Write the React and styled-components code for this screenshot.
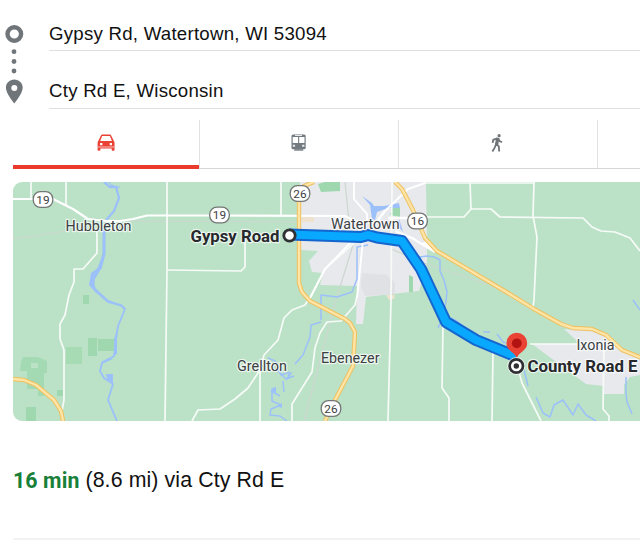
import React from 'react';
import styled, { createGlobalStyle } from 'styled-components';

const shields = [
  { x: 43, y: 199.5, label: '19' },
  { x: 219.5, y: 215, label: '19' },
  { x: 300, y: 193.5, label: '26' },
  { x: 417.5, y: 221, label: '16' },
  { x: 331, y: 408.5, label: '26' },
];

const towns = [
  { x: 65.5, y: 231, width: 66, label: 'Hubbleton' },
  { x: 331, y: 228.5, width: 68.5, label: 'Watertown' },
  { x: 237, y: 371, width: 50, label: 'Grellton' },
  { x: 321, y: 362.5, width: 58.5, label: 'Ebenezer' },
  { x: 576.5, y: 349.5, width: 38, label: 'Ixonia' },
];

const localRoads = [
  'M31 182V199',
  'M66 182V206',
  'M97 230V253L83 269H74V282L69 295L65 315L60 324V339L64 350V400L62 411',
  'M167 182V270L165 421',
  'M167 270L241 271L245 267V240',
  'M281 182V216',
  'M192 421L198 410L220 409L235 399L248 388L260 370L264 355L278 340L284 318L292 310L305 305L311 296L325 269L354 243',
  'M260 370V421',
  'M357 296L355 305L341 321L327 322L320 333L315 348L312 372L292 404V421',
  'M392 182L391 300L388 421',
  'M425 183H535',
  'M470 182L471 209L464 217H413',
  'M471 209L491 209L500 217L583 218L592 227L601 231L615 232L630 238L640 251',
  'M534 182L533 216L537 237L534 300L533 307',
  'M443 325L442 388L449 398V421',
  'M493 353L492 421',
  'M519 372L522 383L541 421',
  'M530 344H604L603 409L609 416V421',
];

const cityStreets = [
  'M355 238L325 269L309 300',
  'M354 182V199L367 214V222',
  'M363 240L357 298',
  'M385 211L408 189L425 183',
];

const streams = [
  'M321 320V295L337 297L352 292L357 279V247L368 245',
  'M321 322L311 325L310 337L303 355L295 364',
  'M268 358L275 361L281 375L290 372',
  'M294 376L286 379L275 368',
  'M283 381L284 392M280 396L271 391M276 388L272 389V401L281 405L271 409L270 415L280 416L287 421',
  'M408 255L420 257L427 256L434 257L440 260V271L444 280L447 292L446 301L443 317L438 328',
  'M451 318L458 322L462 325',
  'M483 332H490M497 334L503 342L506 343',
  'M524 370L528 386M536 397L543 413L550 417L554 405L563 400L573 415L578 404L586 415L596 421',
  'M626 377L626 394L627 402L632 414',
  'M633 300L640 310',
];

const App = () => {
  return (
    <>
      <GlobalStyle />
      <Page>
        <Waypoints>
          <WaypointRail />
          <Fields>
            <Field $height={43} $gap={5}>Gypsy Rd, Watertown, WI 53094</Field>
            <Field $height={58} $gap={6}>Cty Rd E, Wisconsin</Field>
          </Fields>
        </Waypoints>
        <Modes>
          <Mode $active><CarIcon /></Mode>
          <Mode><TrainIcon /></Mode>
          <Mode><WalkIcon /></Mode>
          <Mode />
        </Modes>
        <MapCard>
          <RouteMap />
        </MapCard>
        <Summary>
          <Duration>16 min</Duration>
          <Details>(8.6 mi) via Cty Rd E</Details>
        </Summary>
      </Page>
    </>
  );
};

const WaypointRail = () => (
  <Rail viewBox="0 0 26 84">
    <circle cx="14.3" cy="12" r="6.8" fill="none" stroke="#70757a" strokeWidth="4.4" />
    <g fill="#70757a">
      <circle cx="14" cy="29.7" r="2.4" />
      <circle cx="14" cy="39.5" r="2.4" />
      <circle cx="14" cy="49" r="2.4" />
      <path
        fillRule="evenodd"
        d="M14.3 57.5c-4.8 0-8.4 3.6-8.4 8.3 0 5.8 8.4 15.7 8.4 15.7s8.4-9.9 8.4-15.7c0-4.7-3.6-8.3-8.4-8.3zm0 5.4a3 3 0 1 1 0 6 3 3 0 0 1 0-6z"
      />
    </g>
  </Rail>
);

const CarIcon = () => (
  <Icon viewBox="0 0 18 18">
    <path
      fillRule="evenodd"
      fill="#ea4335"
      d="M4.1 1.2Q4.3.6 5.1.6H13q.8 0 1 .6L17.5 8.2V16q0 .8-.8.8h-1.2q-.8 0-.8-.8v-1.4H3.4V16q0 .8-.8.8H1.4q-.8 0-.8-.8V8.2zM5.2 2L3.2 7.1h11.7L12.9 2z"
    />
    <path fill="#f4938b" d="M1 12.2h16v1.6H1z" />
    <path fill="#fff" d="M3.1 8.9h2.3v2.3H3.1zM12.7 8.9H15v2.3h-2.3z" />
  </Icon>
);

const TrainIcon = () => (
  <Icon viewBox="0 0 18 18">
    <rect x="1.5" y="0.5" width="14.2" height="14.8" rx="1.5" fill="#747b80" />
    <path d="M2.7 3.1h5.4v5.8H2.7zM9.2 3.1h5.3v5.8H9.2z" fill="#fff" />
    <path d="M5 .9h7v1H5zM2.8 10.7h2.3v2.1H2.8zM12.1 10.7h2.3v2.1h-2.3z" fill="#e7e8e9" />
    <path d="M4.2 15.2h9v1.5h-9z" fill="#747b80" />
  </Icon>
);

const WalkIcon = () => (
  <Icon viewBox="0 0 18 18">
    <circle cx="10.1" cy="1.7" r="1.6" fill="#70757a" />
    <path
      d="M8.8 4.1L7.1 10.3M7.8 4.6L4.3 5.8L3.6 8.9M9.1 4.5L10.5 7L13 8.2M7.1 10L5.7 13.6L3.4 17.5M7.4 9.9L9.8 12.4L10.2 17.5"
      fill="none"
      stroke="#70757a"
      strokeWidth="1.8"
    />
    <path d="M7.2 3.5L10.4 4L9.3 10.5H6.1z" fill="#70757a" />
  </Icon>
);

const RouteMap = () => (
  <MapSvg viewBox="13 182 627 239" preserveAspectRatio="xMinYMin slice">
    <rect x="13" y="182" width="640" height="239" fill="#bbe2c6" />

    {/* woodland */}
    <g fill="#9fd8ae">
      <path d="M83 295h6v9h-6zM88 338h9v18h-9zM98 339h16v12H98z" />
      <path d="M66 347h16v17H66z" opacity="0.75" />
      <path d="M23 357h15l9 4v12h-3v23h-6v-7H27v-18h-7l1-9zM31 363v5h7v-5z" fillRule="evenodd" opacity="0.8" />
      <path d="M57 390h6v6h-6zM26 407h10v14H26z" />
    </g>

    {/* built-up areas */}
    <path
      fill="#e7e9ed"
      d="M300 182H426L427 240V263L419 291L366 297L363 324H356L357 286L320 285L323 273L312 272L309 261L318 251L301 250z"
    />
    <path fill="#e7e9ed" d="M532 344H580L564 329L592 331L606 337L622 350L640 360V375L630 377L624 385L624 394H604V386L586 384z" />
    <path fill="#dfe1e5" d="M362 273l25 2 8 8v11l-30 2-4-10z" />
    <path fill="#eee2cf" d="M302 217h12v5h-12zM386 295h9l-1 4-5 1z" />
    <g fill="#9fd8ae">
      <path d="M318 184l7-2h15v9l-19 1zM392 208h8v9l-10-2zM409 275l4 2v15h-4z" />
    </g>

    {/* rail lines */}
    <path d="M13 239L66 231M120 221L300 222M429 265L487 284M345 182L349 222M391 249L429 265M353 245L336 300L304 421" fill="none" stroke="#ccd7d0" strokeWidth="1.2" />

    {/* rivers */}
    <g fill="none" stroke="#9cc0f9" strokeLinejoin="round">
      <path d="M104 182L110 187L116 187L119 198L114 211L107 219L104 228V254L98 270" strokeWidth="2.3" />
      <path d="M104 182L109 182L112 186L120 187M112 185L118 189" strokeWidth="1.2" />
      <path d="M104 229V254L100 269" strokeWidth="3" />
      <path d="M97 271L92 280L95 289L108 301L122 306L125 309L118 326L116 339L114 356L107 360L102 363L100 371L104 378L113 384L108 400L117 421" strokeWidth="1.9" />
      {streams.map((d) => (
        <path key={d} d={d} strokeWidth="1.5" />
      ))}
    </g>
    <path
      fill="#9cc0f9"
      d="M98 268L91 273L89 285L95 292L105 300L94 287L95 279L101 269zM99 296L108 303L121 306L124 310L126 309L121 304L109 302zM117 330L114 339L115 355L117 354zM106 374h7v9l-6-4zM101 362l8-4 4 1-9 4zM362 196L372 203L374 206L384 206L399 203L400 208L388 208L377 212L375 220L372 219L370 205zM271 390l5-3v6zM277 406l5-3v5zM288 374l5-2-7 9zM399 218l4 14-5-6z"
    />

    {/* roads */}
    <g fill="none" stroke="#f7fbf8" strokeWidth="1.7" strokeLinejoin="round">
      {localRoads.map((d) => (
        <path key={d} d={d} />
      ))}
    </g>
    <g fill="none" stroke="#fff" strokeWidth="1.9" strokeLinejoin="round">
      {cityStreets.map((d) => (
        <path key={d} d={d} />
      ))}
      <path d="M13 199H53L73 209L88 219L106 221L120 221L133 219L147 215.5H210L345 216L365 226" strokeWidth="2.2" />
      <path d="M388 218H413M385 211L378 220M395 231L412 238L435 252M365 222V236" strokeWidth="2.4" />
      <path d="M421 244L440 254L428 241z" fill="#fff" strokeWidth="1" />
    </g>

    {/* highways */}
    {[
      'M314 182L304 186L299 193V283L302 292L310 301L345 319L350 323L355 332L353 366L335 400L325 421',
      'M395 182L402 189L413 210L425 238L437 251L508 293L534 309L561 324L573 328L592 329L606 335L622 350L642 358',
      'M13 379L24 380L36 385L54 400L61 411L63 421',
    ].map((d) => (
      <g key={d} fill="none" strokeLinejoin="round">
        <path d={d} stroke="#eec15f" strokeWidth="4.4" />
        <path d={d} stroke="#fee4a6" strokeWidth="2.4" />
      </g>
    ))}

    {/* route */}
    <g fill="none" strokeLinejoin="round">
      <path d="M289 234.5L361 237L368 235L377 237.5L402 241L421 269L446 322L476 340L517 357" stroke="#1565cf" strokeWidth="12" />
      <path d="M289 234.5L361 237L368 235L377 237.5L402 241L421 269L446 322L476 340L517 357" stroke="#07a8fd" strokeWidth="8" />
    </g>

    {shields.map(({ x, y, label }) => (
      <g key={`${x}-${label}`}>
        <rect x={x - 9.8} y={y - 7.8} width="19.6" height="15.6" rx="7.2" fill="#fff" stroke="#747775" strokeWidth="1.3" />
        <ShieldText x={x} y={y + 4.1}>{label}</ShieldText>
      </g>
    ))}

    {towns.map(({ x, y, width, label }) => (
      <TownText key={label} x={x} y={y} textLength={width} lengthAdjust="spacingAndGlyphs">{label}</TownText>
    ))}

    <circle cx="289.5" cy="235.5" r="5.7" fill="#fff" stroke="#303134" strokeWidth="2.8" />
    <path d="M516.8 358.5C515.5 352 506.4 351 506.4 343.2A10.4 10.4 0 0 1 527.2 343.2C527.2 351 518 352 516.8 358.5z" fill="#ea4335" />
    <circle cx="516.8" cy="343.3" r="4.9" fill="#b31412" />
    <circle cx="516.3" cy="366" r="9" fill="#fff" opacity="0.75" />
    <circle cx="516.3" cy="366" r="6.7" fill="#fff" stroke="#303134" strokeWidth="2.7" />
    <circle cx="516.3" cy="366" r="2.7" fill="#303134" />
    <PlaceText x="190.5" y="241.5" textLength="89" lengthAdjust="spacingAndGlyphs">Gypsy Road</PlaceText>
    <PlaceText x="527.5" y="372" textLength="110" lengthAdjust="spacingAndGlyphs">County Road E</PlaceText>
  </MapSvg>
);

const GlobalStyle = createGlobalStyle`
  body {
    margin: 0;
    background: #fff;
    overflow: hidden;
  }
`;

const Page = styled.main`
  box-sizing: border-box;
  width: 640px;
  height: 552px;
  padding: 8px 0 0 13px;
  overflow: hidden;
  font-family: "Liberation Sans", Arial, sans-serif;
  color: #111;
`;

const Waypoints = styled.section`
  display: flex;
  height: 101px;
  margin-left: -13px;
`;

const Rail = styled.svg`
  flex: none;
  width: 26px;
  height: 84px;
  margin: 14px 23px 0 0;
`;

const Fields = styled.div`
  flex: 1;
`;

const Field = styled.div`
  box-sizing: border-box;
  display: flex;
  align-items: flex-end;
  height: ${({ $height }) => $height}px;
  padding-bottom: ${({ $gap }) => $gap}px;
  border-bottom: 1px solid #dfe0e1;
  font-size: 18.67px;
  line-height: 22px;
  letter-spacing: 0.24px;
  white-space: nowrap;
`;

const Modes = styled.nav`
  display: grid;
  grid-template-columns: 186px 199px 199px 199px;
  height: 49px;
  margin-top: 11px;
`;

const Mode = styled.div`
  box-sizing: border-box;
  display: flex;
  justify-content: center;
  padding-top: 14px;
  border-left: ${({ $active }) => ($active ? 'none' : '1px solid #dfe1e5')};
  border-bottom: ${({ $active }) => ($active ? '4px solid #e93a2b' : '1px solid #d5d6d8')};
`;

const Icon = styled.svg`
  width: 18px;
  height: 18px;
`;

const MapCard = styled.section`
  height: 239px;
  margin-top: 13px;
  border-radius: 9px 0 0 9px;
  overflow: hidden;
`;

const MapSvg = styled.svg`
  display: block;
  width: 627px;
  height: 239px;
  font-family: Roboto, sans-serif;
`;

const ShieldText = styled.text`
  font-size: 11.8px;
  fill: #3c4043;
  text-anchor: middle;
`;

const TownText = styled.text`
  font-size: 14.4px;
  fill: #3c4043;
  stroke: rgba(255, 255, 255, 0.7);
  stroke-width: 2.5px;
  stroke-linejoin: round;
  paint-order: stroke;
`;

const PlaceText = styled(TownText)`
  font-size: 16.8px;
  font-weight: 700;
  fill: #27292c;
`;

const Summary = styled.section`
  box-sizing: border-box;
  display: flex;
  align-items: center;
  gap: 6px;
  height: 119px;
  padding-top: 2px;
  border-bottom: 2px solid #f3f3f4;
  font-size: 21.33px;
  white-space: nowrap;
`;

const Duration = styled.strong`
  font-family: Roboto, sans-serif;
  font-weight: 700;
  letter-spacing: 0.1px;
  color: #188038;
`;

const Details = styled.span`
  letter-spacing: 0.1px;
`;

export default App;
